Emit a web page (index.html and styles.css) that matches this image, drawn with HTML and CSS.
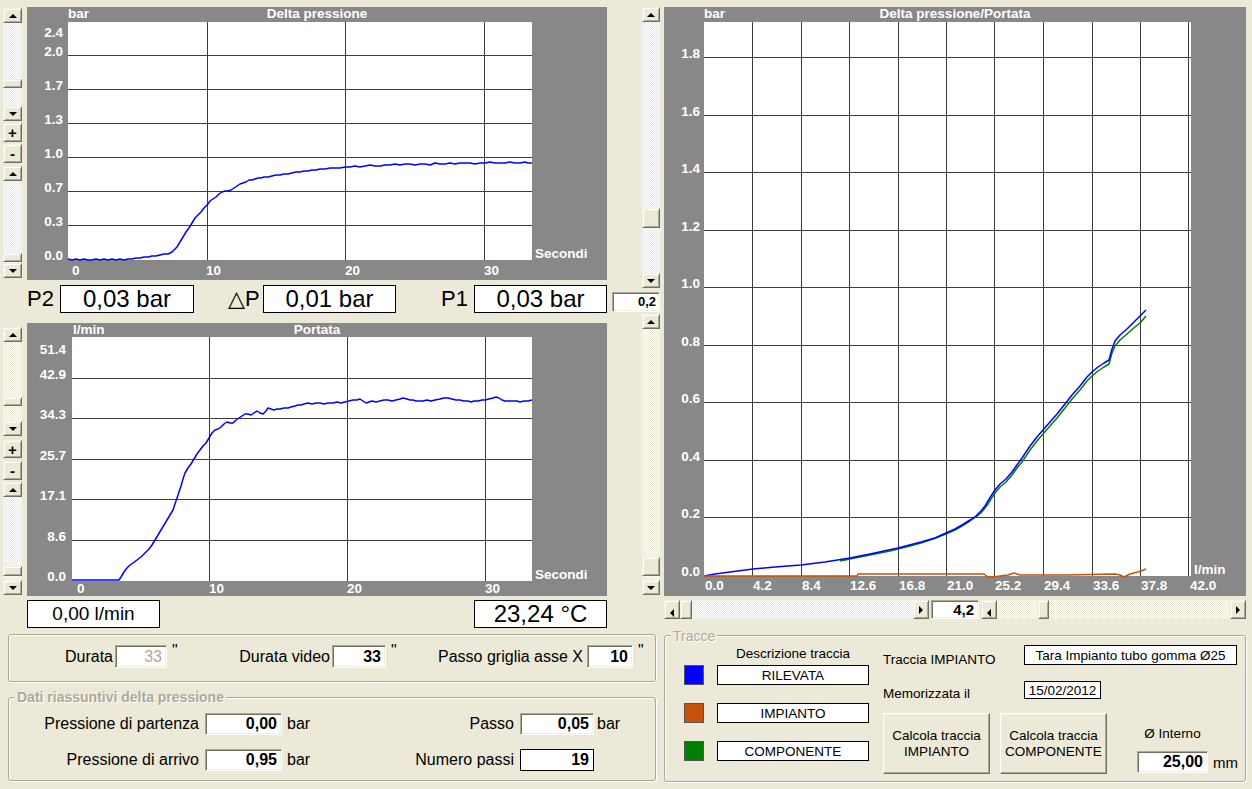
FILE: index.html
```html
<!DOCTYPE html>
<html>
<head>
<meta charset="utf-8">
<title>Delta pressione</title>
<link rel="stylesheet" href="styles.css">
</head>
<body>
<div class="screen">
  <div class="top">
    <div class="left">
      <div class="chart-row">
        <div class="side side1">
          <div class="vscroll vs-1a"><div class="btn up"></div><div class="track"><div class="thumb"></div></div><div class="btn down"></div></div>
          <div class="btn pm pm-plus1">+</div>
          <div class="btn pm pm-minus1">-</div>
          <div class="vscroll vs-1b"><div class="btn up"></div><div class="track"><div class="thumb"></div></div><div class="btn down"></div></div>
        </div>
        <div class="chart chart-small">
          <svg width="580" height="273" viewBox="27 7 580 273">
            <rect x="68" y="22" width="464" height="238" fill="#fff"/>
            <g class="grid">
              <line x1="68" y1="55.5" x2="532" y2="55.5"/>
              <line x1="68" y1="89.5" x2="532" y2="89.5"/>
              <line x1="68" y1="123.5" x2="532" y2="123.5"/>
              <line x1="68" y1="157.5" x2="532" y2="157.5"/>
              <line x1="68" y1="191.5" x2="532" y2="191.5"/>
              <line x1="68" y1="225.5" x2="532" y2="225.5"/>
              <line x1="207.5" y1="22" x2="207.5" y2="260"/>
              <line x1="345.5" y1="22" x2="345.5" y2="260"/>
              <line x1="484.5" y1="22" x2="484.5" y2="260"/>
            </g>
            <text class="ax" x="68" y="18">bar</text>
            <text class="ax" x="317" y="18" text-anchor="middle">Delta pressione</text>
            <text class="ax" x="63" y="37" text-anchor="end">2.4</text>
            <text class="ax" x="63" y="56" text-anchor="end">2.0</text>
            <text class="ax" x="63" y="90" text-anchor="end">1.7</text>
            <text class="ax" x="63" y="124" text-anchor="end">1.3</text>
            <text class="ax" x="63" y="158" text-anchor="end">1.0</text>
            <text class="ax" x="63" y="192" text-anchor="end">0.7</text>
            <text class="ax" x="63" y="226" text-anchor="end">0.3</text>
            <text class="ax" x="63" y="260" text-anchor="end">0.0</text>
            <text class="ax" x="72" y="275">0</text>
            <text class="ax" x="206" y="275">10</text>
            <text class="ax" x="345" y="275">20</text>
            <text class="ax" x="484" y="275">30</text>
            <text class="ax" x="535" y="258">Secondi</text>
            <polyline class="trace-blue" points="68,259 72,260 76,259 80,260 84,259 88,260 92,260 96,259 100,260 104,259 108,260 112,259 116,260 120,259 124,260 128,259 132,259 136,258 140,258 144,257 148,257 152,256 156,256 160,255 164,254 168,254 172,252 174,250 177,247 180,242 183,237 186,232 189,228 192,223 195,218 198,215 201,212 204,208 207,205 210,201 213,199 216,197 219,194 222,192 225,191 228,191 231,190 234,188 237,186 240,184 243,183 246,182 249,180 252,180 255,179 258,178 261,178 264,177 268,177 272,176 276,175 280,175 284,174 288,174 292,173 296,172 300,172 304,171 308,171 312,170 316,170 320,169 325,169 330,168 335,168 340,168 345,167 350,167 355,166 360,167 365,166 370,165 375,166 380,166 385,165 390,165 395,164 400,165 405,164 410,164 415,165 420,164 425,164 430,165 435,163 440,164 445,164 450,163 455,164 460,163 465,163 470,163 475,164 480,163 485,163 490,162 495,163 500,163 505,163 510,162 515,163 520,163 525,162 528,163 532,163"/>
          </svg>
        </div>
      </div>

      <div class="readouts">
        <div class="plabel p2">P2</div>
        <div class="rbox big w134">0,03 bar</div>
        <div class="plabel dp">△P</div>
        <div class="rbox big w133">0,01 bar</div>
        <div class="plabel p1">P1</div>
        <div class="rbox big w133">0,03 bar</div>
      </div>

      <div class="chart-row">
        <div class="side side2">
          <div class="vscroll vs-2a"><div class="btn up"></div><div class="track"><div class="thumb"></div></div><div class="btn down"></div></div>
          <div class="btn pm pm-plus2">+</div>
          <div class="btn pm pm-minus2">-</div>
          <div class="vscroll vs-2b"><div class="btn up"></div><div class="track"><div class="thumb"></div></div><div class="btn down"></div></div>
        </div>
        <div class="chart chart-small">
          <svg width="580" height="273" viewBox="27 323 580 273">
            <rect x="72" y="337" width="460" height="244" fill="#fff"/>
            <g class="grid">
              <line x1="72" y1="378.5" x2="532" y2="378.5"/>
              <line x1="72" y1="418.5" x2="532" y2="418.5"/>
              <line x1="72" y1="459.5" x2="532" y2="459.5"/>
              <line x1="72" y1="499.5" x2="532" y2="499.5"/>
              <line x1="72" y1="540.5" x2="532" y2="540.5"/>
              <line x1="209.5" y1="337" x2="209.5" y2="581"/>
              <line x1="347.5" y1="337" x2="347.5" y2="581"/>
              <line x1="485.5" y1="337" x2="485.5" y2="581"/>
            </g>
            <text class="ax" x="73" y="334">l/min</text>
            <text class="ax" x="317" y="334" text-anchor="middle">Portata</text>
            <text class="ax" x="66" y="354" text-anchor="end">51.4</text>
            <text class="ax" x="66" y="379" text-anchor="end">42.9</text>
            <text class="ax" x="66" y="419" text-anchor="end">34.3</text>
            <text class="ax" x="66" y="460" text-anchor="end">25.7</text>
            <text class="ax" x="66" y="500" text-anchor="end">17.1</text>
            <text class="ax" x="66" y="541" text-anchor="end">8.6</text>
            <text class="ax" x="66" y="581" text-anchor="end">0.0</text>
            <text class="ax" x="77" y="593">0</text>
            <text class="ax" x="209" y="593">10</text>
            <text class="ax" x="347" y="593">20</text>
            <text class="ax" x="485" y="593">30</text>
            <text class="ax" x="535" y="579">Secondi</text>
            <polyline class="trace-blue" points="72,580 119,580 121,577 124,572 127,568 130,565 133,563 137,560 141,557 145,553 149,549 152,545 155,540 158,535 161,530 164,525 167,520 170,515 173,510 175,504 177,498 179,492 181,486 183,479 185,473 188,468 191,464 194,459 197,454 200,450 203,446 206,443 209,438 212,433 215,430 218,429 221,427 224,424 227,422 230,423 233,423 236,420 239,418 242,416 245,414 248,414 251,415 254,413 257,411 260,413 263,414 266,411 268,408 271,409 274,410 277,409 280,409 284,408 288,408 291,407 295,406 298,405 301,405 304,404 308,403 312,404 316,403 320,403 324,404 328,403 333,403 337,402 341,403 345,402 349,401 353,400 357,400 360,399 363,401 366,403 369,402 372,401 376,402 380,401 384,400 388,400 392,401 396,400 400,399 403,398 407,399 410,400 413,400 416,401 419,401 423,401 427,400 431,401 435,400 440,399 444,398 448,398 452,399 456,400 460,400 464,401 468,401 471,402 474,401 478,401 482,400 485,400 489,399 493,398 496,397 499,398 502,400 505,401 509,401 513,401 517,401 520,402 524,401 528,401 532,400"/>
          </svg>
        </div>
      </div>

      <div class="readouts2">
        <div class="rbox mid-size">0,00 l/min</div>
        <div class="rbox big w133">23,24 °C</div>
      </div>
    </div>

    <div class="mid">
      <div class="vscroll vs-m1"><div class="btn up"></div><div class="track"><div class="thumb"></div></div><div class="btn down"></div></div>
      <div class="inbox num02">0,2</div>
      <div class="vscroll vs-m2"><div class="btn up"></div><div class="track"><div class="thumb"></div></div><div class="btn down"></div></div>
    </div>

    <div class="right">
      <div class="chart chart-big">
        <svg width="582" height="589" viewBox="664 7 582 589">
          <rect x="704" y="22" width="487" height="554" fill="#fff"/>
          <g class="grid">
            <line x1="704" y1="57.5" x2="1191" y2="57.5"/>
            <line x1="704" y1="115.5" x2="1191" y2="115.5"/>
            <line x1="704" y1="172.5" x2="1191" y2="172.5"/>
            <line x1="704" y1="230.5" x2="1191" y2="230.5"/>
            <line x1="704" y1="287.5" x2="1191" y2="287.5"/>
            <line x1="704" y1="345.5" x2="1191" y2="345.5"/>
            <line x1="704" y1="402.5" x2="1191" y2="402.5"/>
            <line x1="704" y1="460.5" x2="1191" y2="460.5"/>
            <line x1="704" y1="517.5" x2="1191" y2="517.5"/>
            <line x1="752.5" y1="22" x2="752.5" y2="576"/>
            <line x1="801.5" y1="22" x2="801.5" y2="576"/>
            <line x1="849.5" y1="22" x2="849.5" y2="576"/>
            <line x1="898.5" y1="22" x2="898.5" y2="576"/>
            <line x1="946.5" y1="22" x2="946.5" y2="576"/>
            <line x1="994.5" y1="22" x2="994.5" y2="576"/>
            <line x1="1043.5" y1="22" x2="1043.5" y2="576"/>
            <line x1="1092.5" y1="22" x2="1092.5" y2="576"/>
            <line x1="1140.5" y1="22" x2="1140.5" y2="576"/>
            <line x1="1188.5" y1="22" x2="1188.5" y2="576"/>
          </g>
          <text class="ax" x="704" y="18">bar</text>
          <text class="ax" x="955" y="18" text-anchor="middle">Delta pressione/Portata</text>
          <text class="ax" x="700" y="58" text-anchor="end">1.8</text>
          <text class="ax" x="700" y="116" text-anchor="end">1.6</text>
          <text class="ax" x="700" y="173" text-anchor="end">1.4</text>
          <text class="ax" x="700" y="231" text-anchor="end">1.2</text>
          <text class="ax" x="700" y="288" text-anchor="end">1.0</text>
          <text class="ax" x="700" y="346" text-anchor="end">0.8</text>
          <text class="ax" x="700" y="403" text-anchor="end">0.6</text>
          <text class="ax" x="700" y="461" text-anchor="end">0.4</text>
          <text class="ax" x="700" y="518" text-anchor="end">0.2</text>
          <text class="ax" x="700" y="576" text-anchor="end">0.0</text>
          <text class="ax" x="705" y="590">0.0</text>
          <text class="ax" x="753" y="590">4.2</text>
          <text class="ax" x="802" y="590">8.4</text>
          <text class="ax" x="850" y="590">12.6</text>
          <text class="ax" x="899" y="590">16.8</text>
          <text class="ax" x="947" y="590">21.0</text>
          <text class="ax" x="995" y="590">25.2</text>
          <text class="ax" x="1044" y="590">29.4</text>
          <text class="ax" x="1093" y="590">33.6</text>
          <text class="ax" x="1141" y="590">37.8</text>
          <text class="ax" x="1190" y="590">42.0</text>
          <text class="ax" x="1194" y="574">l/min</text>
          <polyline class="trace-green" points="840,561 850,559 860,557 870,555 880,553 890,551 898,549 910,546 921,543 933,539 946,534 955,530 962,526 970,521 976,517 981,513 985,508 988,504 991,499 995,493 1000,487 1006,482 1012,475 1017,468 1022,462 1030,450 1037,441 1043,434 1050,426 1057,418 1065,408 1072,399 1080,390 1087,381 1092,376 1098,371 1104,367 1109,364 1112,353 1115,346 1120,340 1127,334 1135,327 1141,322 1146,316"/>
          <polyline class="trace-blue2" points="704,576 715,574 730,572 753,569 775,567 801,565 825,562 850,558 870,554 898,548 921,542 935,538 946,533 955,529 962,525 970,520 976,516 981,511 985,506 988,501 991,496 995,490 1000,484 1006,479 1012,472 1017,465 1022,458 1030,446 1037,437 1043,430 1050,422 1057,414 1065,404 1072,395 1080,386 1087,377 1092,372 1098,367 1104,363 1109,360 1112,349 1115,341 1120,335 1127,329 1135,321 1141,315 1146,310"/>
          <polyline class="trace-orange" points="704,576 857,576 858,574 984,574 988,577 993,577 1000,576 1008,575 1014,573 1020,575 1066,575 1115,574 1120,575 1124,577 1130,574 1138,572 1146,569"/>
        </svg>
      </div>
      <div class="hrow">
        <div class="hscroll hs-a"><div class="btn left"></div><div class="track"><div class="thumb"></div></div><div class="btn right-arrow"></div></div>
        <div class="inbox num42">4,2</div>
        <div class="hscroll hs-b"><div class="btn left"></div><div class="track"><div class="thumb"></div></div><div class="btn right-arrow"></div></div>
      </div>
    </div>
  </div>

  <div class="bottom">
    <div class="bl">
      <div class="group g1">
        <div class="lbl l-durata">Durata</div>
        <div class="inbox val disabled w52">33</div>
        <div class="quote">"</div>
        <div class="lbl l-video">Durata video</div>
        <div class="inbox val w54">33</div>
        <div class="quote">"</div>
        <div class="lbl l-passo">Passo griglia asse X</div>
        <div class="inbox val w46">10</div>
        <div class="quote">"</div>
      </div>
      <div class="group g2">
        <div class="group-title">Dati riassuntivi delta pressione</div>
        <div class="lbl rlbl">Pressione di partenza</div>
        <div class="inbox val gbox">0,00</div>
        <div class="unit">bar</div>
        <div class="lbl rlbl">Passo</div>
        <div class="inbox val gbox2">0,05</div>
        <div class="unit unit2">bar</div>
        <div class="lbl rlbl">Pressione di arrivo</div>
        <div class="inbox val gbox">0,95</div>
        <div class="unit">bar</div>
        <div class="lbl rlbl">Numero passi</div>
        <div class="plain val gbox2">19</div>
        <div></div>
      </div>
    </div>
    <div class="br">
      <div class="group tracce">
        <div class="group-title">Tracce</div>
        <div class="tr-col">
          <div class="tr-head">Descrizione traccia</div>
          <div class="tr-row"><div class="swatch blue"></div><div class="tbox desc">RILEVATA</div></div>
          <div class="tr-row"><div class="swatch orange"></div><div class="tbox desc">IMPIANTO</div></div>
          <div class="tr-row"><div class="swatch green"></div><div class="tbox desc">COMPONENTE</div></div>
        </div>
        <div class="tr-right">
          <div class="tr-line">
            <div class="tr-lbl">Traccia IMPIANTO</div>
            <div class="tbox tara">Tara Impianto tubo gomma Ø25</div>
          </div>
          <div class="tr-line tr-line2">
            <div class="tr-lbl">Memorizzata il</div>
            <div class="tbox date">15/02/2012</div>
          </div>
          <div class="tr-line tr-line3">
            <div class="pbtn">Calcola traccia<br>IMPIANTO</div>
            <div class="pbtn">Calcola traccia<br>COMPONENTE</div>
            <div class="diam">
              <div class="diam-lbl">Ø Interno</div>
              <div class="diam-row"><div class="inbox val dbox">25,00</div><div class="mm">mm</div></div>
            </div>
          </div>
        </div>
      </div>
    </div>
  </div>
</div>
</body>
</html>
```

FILE: styles.css
```css
* { box-sizing: border-box; }
html, body { margin: 0; padding: 0; }
body {
  width: 1252px;
  height: 789px;
  overflow: hidden;
  background: #ECE9D8;
  font-family: "Liberation Sans", Arial, "DejaVu Sans", sans-serif;
  color: #000;
}
.screen { display: flex; flex-direction: column; width: 1252px; height: 789px; }
.top { display: flex; height: 633px; }

/* ---------- left column ---------- */
.left { width: 612px; display: flex; flex-direction: column; padding-top: 7px; }
.chart-row { display: flex; height: 273px; }
.side { width: 19px; margin-left: 3px; margin-right: 5px; display: flex; flex-direction: column; }
.side1 { padding-top: 1px; }
.side2 { padding-top: 4px; }
.chart { background: #888888; flex: none; }
.chart svg { display: block; }
.chart-small { width: 580px; height: 273px; }
.chart-big { width: 582px; height: 589px; }

.grid line { stroke: #3c3c3c; stroke-width: 1; shape-rendering: crispEdges; }
.ax { font-family: "Liberation Sans", Arial, sans-serif; font-weight: bold; font-size: 13.5px; fill: #fff; }
.trace-blue, .trace-blue2, .trace-green, .trace-orange { fill: none; stroke-width: 1.5; stroke-linejoin: round; }
.trace-blue, .trace-blue2 { stroke: #0000ff; }
.trace-green { stroke: #008000; }
.trace-orange { stroke: #c8500a; }

/* ---------- scroll bars & buttons ---------- */
.btn, .thumb {
  background: #ECE9D8;
  border: 1px solid;
  border-color: #F1EFE2 #716F64 #716F64 #F1EFE2;
  box-shadow: inset 1px 1px 0 #fff, inset -1px -1px 0 #ACA899;
  flex: none;
}
.btn { display: flex; align-items: center; justify-content: center; }
.vscroll { display: flex; flex-direction: column; width: 19px; flex: none; }
.vscroll .btn { height: 15px; }
.hscroll { display: flex; height: 19px; flex: none; }
.hscroll .btn { width: 16px; }
.track {
  flex: 1;
  display: flex;
  flex-direction: column;
  background: repeating-conic-gradient(#ECE9D8 0 25%, #ffffff 0 50%) 0 0 / 2px 2px;
}
.hscroll .track { flex-direction: row; }
.vscroll .thumb { width: 100%; }
.hscroll .thumb { height: 100%; }

.up::after { content: ""; border-left: 4px solid transparent; border-right: 4px solid transparent; border-bottom: 4px solid #000; }
.down::after { content: ""; border-left: 4px solid transparent; border-right: 4px solid transparent; border-top: 4px solid #000; }
.hscroll .left::after { content: ""; border-top: 4px solid transparent; border-bottom: 4px solid transparent; border-right: 4px solid #000; }
.right-arrow::after { content: ""; border-top: 4px solid transparent; border-bottom: 4px solid transparent; border-left: 4px solid #000; }

.pm { width: 19px; height: 19px; font-weight: bold; font-size: 15px; line-height: 1; }

.vs-1a { height: 113px; }
.vs-1a .thumb { margin-top: 56px; height: 9px; }
.pm-plus1 { margin-top: 2px; }
.pm-minus1 { margin-top: 2px; }
.vs-1b { height: 112px; margin-top: 3px; }
.vs-1b .thumb { margin-top: 72px; height: 9px; }

.vs-2a { height: 109px; }
.vs-2a .thumb { margin-top: 55px; height: 9px; }
.pm-plus2 { margin-top: 4px; height: 18px; }
.pm-minus2 { margin-top: 3px; }
.vs-2b { height: 113px; margin-top: 2px; }
.vs-2b .thumb { margin-top: 69px; height: 10px; }

/* ---------- readouts ---------- */
.readouts { display: flex; height: 43px; padding: 5px 0 0 27px; align-items: flex-start; }
.plabel { font-size: 22px; line-height: 28px; height: 28px; white-space: nowrap; }
.p2 { width: 33px; }
.dp { width: 35px; margin-left: 34px; }
.p1 { width: 33px; margin-left: 45px; }
.rbox {
  background: #fff;
  border: 1px solid #000;
  height: 28px;
  display: flex;
  align-items: center;
  justify-content: center;
  white-space: nowrap;
  flex: none;
}
.big { font-size: 24px; }
.w134 { width: 134px; }
.w133 { width: 133px; }
.readouts2 { display: flex; height: 37px; padding: 4px 5px 0 27px; justify-content: space-between; align-items: flex-start; }
.mid-size { width: 133px; font-size: 19px; }

/* ---------- middle column ---------- */
.mid { width: 52px; display: flex; flex-direction: column; align-items: flex-end; padding-right: 4px; }
.vs-m1 { width: 18px; height: 281px; margin-top: 7px; }
.vs-m1 .thumb { margin-top: 186px; height: 20px; }
.vs-m2 { width: 18px; height: 281px; margin-top: 2px; }
.vs-m2 .thumb { margin-top: 228px; height: 19px; }
.num02 { width: 48px; height: 20px; margin-top: 4px; font-size: 13px; font-weight: bold; line-height: 18px; text-align: right; padding-right: 3px; }

/* ---------- right column ---------- */
.right { width: 588px; display: flex; flex-direction: column; padding-top: 7px; }
.hrow { display: flex; margin-top: 4px; height: 19px; }
.hs-a { width: 265px; }
.hs-a .thumb { width: 12px; }
.hs-b { width: 265px; margin-left: 2px; }
.hs-b .thumb { margin-left: 41px; width: 11px; }
.num42 { width: 48px; height: 19px; margin-left: 2px; font-size: 15px; font-weight: bold; line-height: 17px; text-align: right; padding-right: 4px; }

/* ---------- inputs ---------- */
.inbox {
  background: #fff;
  border: 1px solid;
  border-color: #ACA899 #fff #fff #ACA899;
  box-shadow: inset 1px 1px 0 #716F64, inset -1px -1px 0 #F1EFE2;
  flex: none;
  white-space: nowrap;
}
.plain { background: #fff; border: 1px solid #000; flex: none; }
.val { font-weight: bold; font-size: 16px; text-align: right; padding-right: 4px; }
.disabled { color: #ACA899; font-weight: normal; }

/* ---------- bottom ---------- */
.bottom { display: flex; height: 156px; }
.bl { width: 660px; padding-left: 8px; padding-right: 4px; }
.br { margin-left: 4px; }
.group {
  position: relative;
  border: 1px solid #ACA899;
  border-radius: 3px;
  box-shadow: inset 1px 1px 0 #fff, 1px 1px 0 #fff;
}
.group-title {
  position: absolute;
  top: -9px;
  left: 6px;
  padding: 0 2px;
  background: #ECE9D8;
  color: #ACA899;
  font-size: 14px;
  font-weight: bold;
  line-height: 16px;
  text-shadow: 1px 1px 0 #fff;
}
.lbl { font-size: 16px; white-space: nowrap; }

.g1 { margin-top: 1px; height: 48px; display: flex; align-items: flex-start; padding-top: 10px; }
.g1 .lbl { line-height: 23px; text-align: right; flex: none; }
.l-durata { width: 104px; margin-right: 2px; }
.l-video { width: 143px; margin-right: 2px; }
.l-passo { width: 177px; margin-right: 4px; }
.g1 .inbox { height: 23px; line-height: 21px; }
.w52 { width: 52px; }
.w54 { width: 54px; }
.w46 { width: 46px; }
.quote { width: 20px; padding-left: 5px; font-size: 16px; line-height: 12px; flex: none; }

.g2 {
  margin-top: 15px;
  height: 84px;
  display: grid;
  grid-template-columns: 190px 84px 48px 183px 80px auto;
  grid-auto-rows: 22px;
  row-gap: 14px;
  padding-top: 15px;
  align-items: center;
}
.rlbl { text-align: right; }
.gbox { width: 77px; height: 22px; margin-left: 6px; line-height: 20px; }
.gbox2 { width: 74px; height: 22px; margin-left: 6px; line-height: 20px; }
.unit { font-size: 16px; padding-left: 4px; }
.unit2 { padding-left: 3px; }

/* ---------- tracce ---------- */
.tracce {
  margin-top: 2px;
  width: 582px;
  height: 147px;
  display: flex;
  align-items: flex-start;
  padding: 11px 0 0 19px;
  font-size: 13.5px;
}
.tracce .group-title { font-weight: normal; font-size: 14px; top: -8px; }
.tr-col { width: 186px; flex: none; display: flex; flex-direction: column; }
.tr-head { height: 14px; line-height: 14px; margin-left: 33px; width: 152px; text-align: center; white-space: nowrap; }
.tr-row { display: flex; margin-top: 18px; height: 20px; }
.tr-head + .tr-row { margin-top: 4px; }
.swatch { width: 20px; height: 20px; border: 1px solid #555; flex: none; }
.blue { background: #0000ff; }
.orange { background: #c8500a; }
.green { background: #008000; }
.tbox {
  background: #fff;
  border: 1px solid #000;
  display: flex;
  align-items: center;
  justify-content: center;
  white-space: nowrap;
  flex: none;
}
.desc { width: 152px; height: 20px; margin-left: 13px; }

.tr-right { margin-left: 13px; margin-top: -2px; display: flex; flex-direction: column; }
.tr-line { display: flex; align-items: flex-start; }
.tr-lbl { width: 141px; flex: none; white-space: nowrap; line-height: 16px; margin-top: 7px; }
.tara { width: 213px; height: 20px; }
.tr-line2 { margin-top: 13px; }
.tr-line2 .tr-lbl { margin-top: 5px; }
.date { width: 77px; height: 18px; }
.tr-line3 { margin-top: 11px; }
.pbtn {
  width: 107px;
  height: 61px;
  margin-right: 10px;
  background: #ECE9D8;
  border: 1px solid;
  border-color: #fff #716F64 #716F64 #fff;
  box-shadow: inset -1px -1px 0 #ACA899, inset 1px 1px 0 #F1EFE2;
  display: flex;
  align-items: center;
  justify-content: center;
  text-align: center;
  line-height: 16px;
  flex: none;
}
.diam { margin-left: 20px; display: flex; flex-direction: column; }
.diam-lbl { width: 71px; text-align: center; margin-top: 13px; line-height: 16px; white-space: nowrap; }
.diam-row { display: flex; align-items: center; margin-top: 9px; }
.dbox { width: 71px; height: 22px; line-height: 20px; }
.mm { font-size: 15px; margin-left: 5px; }
```
